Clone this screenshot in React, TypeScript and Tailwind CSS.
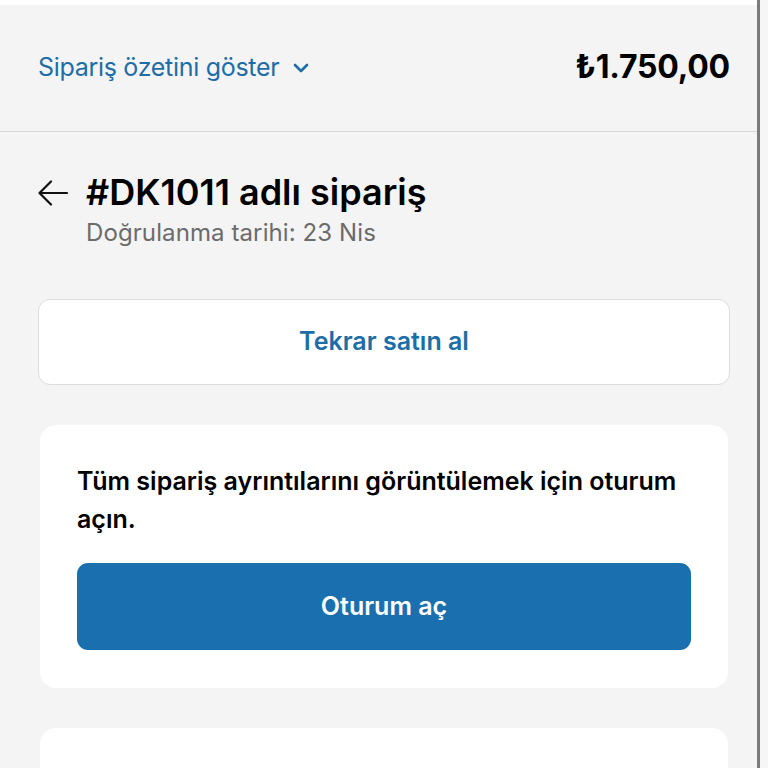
import React from "react";

export default function App() {
  const font = { fontFamily: "Inter, 'Noto Sans', 'DejaVu Sans', sans-serif" };
  return (
    <div className="relative w-[768px] h-[768px] overflow-hidden bg-[#f4f4f4]" style={font}>
      <div className="h-[5px] bg-white" />
      <header className="h-[127px] border-b border-[#d8d8d8] flex items-center justify-between px-[38px] pb-[2px]">
        <div className="flex items-center gap-[13px] text-[#1d6ea6] text-[25px] leading-none tracking-[-0.3px]">
          <span>Sipariş özetini göster</span>
          <svg width="18" height="12" viewBox="0 0 18 12" className="mt-[2px]">
            <path d="M3 3 L9 9 L15 3" fill="none" stroke="#1d6ea6" strokeWidth="2.6" strokeLinecap="round" strokeLinejoin="round" />
          </svg>
        </div>
        <div className="text-[32px] font-bold text-black leading-none tracking-[-0.2px]">₺1.750,00</div>
      </header>

      <main className="px-[38px]">
        <div className="flex items-start gap-[18px] pt-[40px]">
          <svg width="30" height="26" viewBox="0 0 30 26" className="mt-[8px] shrink-0">
            <path d="M1.5 13 H29 M13 1.5 L1.5 13 L13 24.5" fill="none" stroke="#111" strokeWidth="2.2" strokeLinecap="round" strokeLinejoin="round" />
          </svg>
          <div className="flex flex-col">
            <h1 className="text-[36px] font-semibold text-black leading-[40px]">#DK1011 adlı sipariş</h1>
            <p className="text-[24px] text-[#6b6b6b] leading-[30px] mt-[6px] tracking-[0.1px]">Doğrulanma tarihi: 23 Nis</p>
          </div>
        </div>

        <button className="mt-[51px] w-full h-[86px] bg-white border border-[#dcdcdc] rounded-[12px] flex items-center justify-center text-[25px] font-semibold text-[#1d6ea6]">
          Tekrar satın al
        </button>

        <section className="mt-[40px] mx-[2px] bg-white rounded-[16px] px-[37px] pt-[37px] pb-[38px]">
          <p className="text-[25px] font-semibold text-black leading-[38px]">
            Tüm sipariş ayrıntılarını görüntülemek için oturum açın.
          </p>
          <button className="mt-[25px] w-full h-[87px] bg-[#1a70ae] rounded-[11px] flex items-center justify-center text-[25px] font-semibold text-white">
            Oturum aç
          </button>
        </section>

        <section className="mt-[40px] mx-[2px] h-[120px] bg-white rounded-[16px]" />
      </main>

      <div className="absolute top-0 bottom-0 left-[757px] w-[3px] bg-[#7b7b7b]" />
      <div className="absolute top-0 bottom-0 left-[760px] right-0 bg-[#f6f6f6]" />
    </div>
  );
}
